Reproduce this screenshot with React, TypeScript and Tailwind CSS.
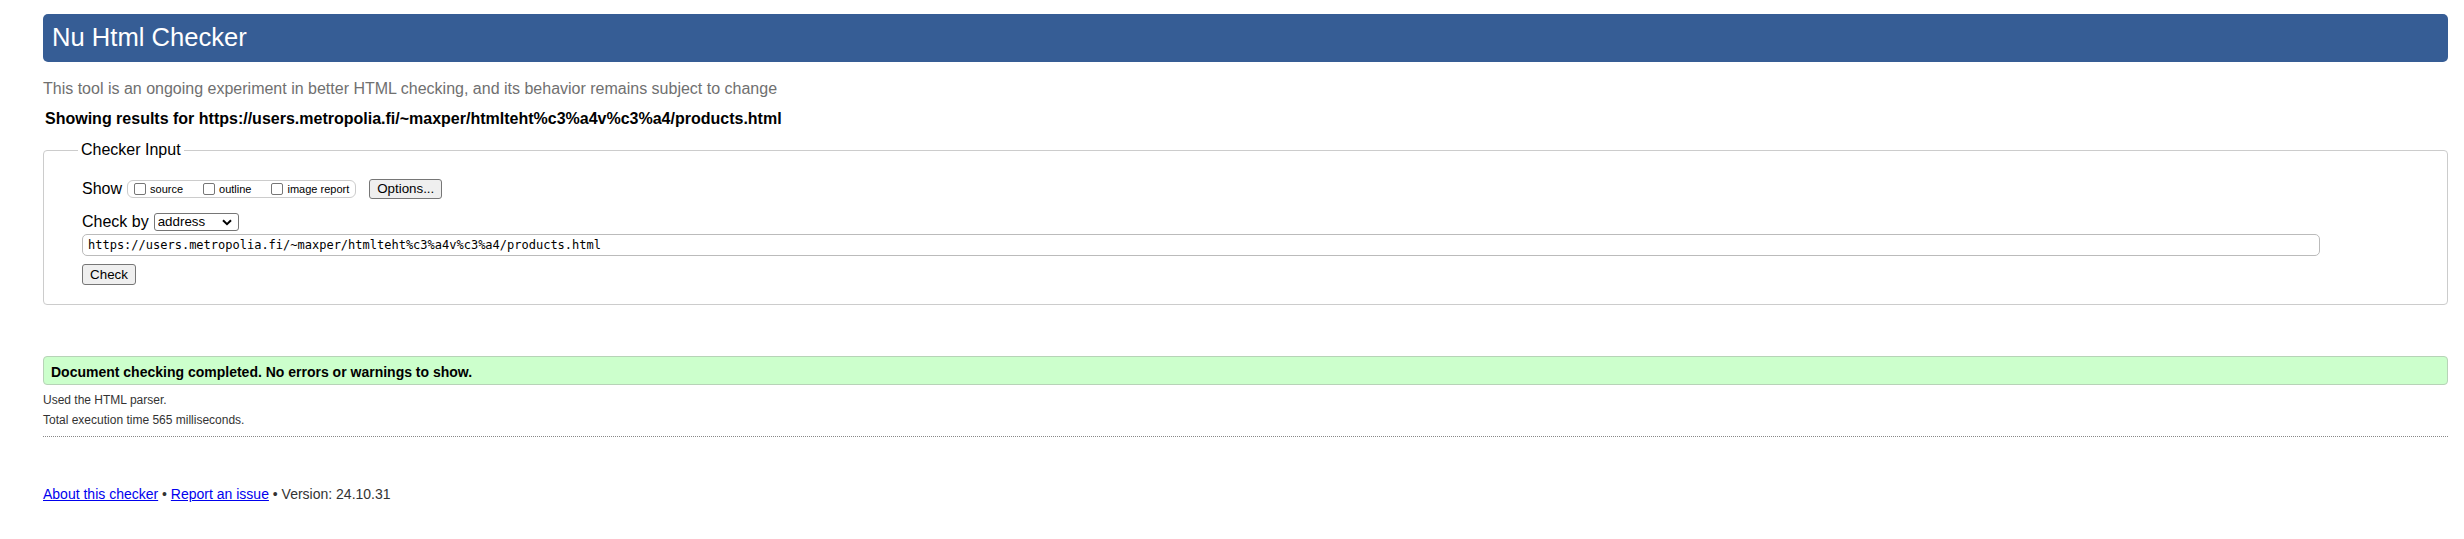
import React from "react";

function Check({ label, last }: { label: string; last?: boolean }) {
  return (
    <label className={`flex items-center text-[11px] leading-[13px] text-black ${last ? "" : "mr-[20px]"}`}>
      <input
        type="checkbox"
        className="m-0 h-[12px] w-[12px] appearance-none rounded-[2px] border border-[#767676] bg-white"
      />
      <span className="ml-[4px]">{label}</span>
    </label>
  );
}

export default function App() {
  return (
    <div className="min-h-[539px] bg-white pl-[43px] pr-[16px] pt-[14px] font-['Liberation_Sans',Arial,sans-serif] text-black">
      <h1 className="flex h-[48px] items-center rounded-[5px] bg-[#365d95] pl-[9px] text-[25.6px] font-normal leading-none text-white">
        Nu Html Checker
      </h1>

      <p className="mt-[17px] text-[16px] leading-[19px] text-[#707070]">
        This tool is an ongoing experiment in better HTML checking, and its behavior remains subject to change
      </p>
      <p className="mt-[11px] pl-[2px] text-[16px] font-bold leading-[19px]">
        Showing results for https://users.metropolia.fi/~maxper/htmlteht%c3%a4v%c3%a4/products.html
      </p>

      <fieldset className="mt-[13px] rounded-[4px] border border-[#cccccc] pb-[19px] pl-[38px]">
        <legend className="-ml-[4px] px-[3px] text-[16px] leading-[18px]">Checker Input</legend>
        <div className="pt-[20px]">
          <div className="flex h-[20px] items-center">
            <span className="text-[16px] leading-[18px]">Show</span>
            <div className="ml-[5px] flex h-[18px] items-center rounded-[6px] border border-[#cccccc] px-[6px]">
              <Check label="source" />
              <Check label="outline" />
              <Check label="image report" last />
            </div>
            <button className="ml-[13px] h-[20px] w-[73px] rounded-[3px] border border-[#767676] bg-[#efefef] text-[13.33px] leading-none text-black">
              Options...
            </button>
          </div>

          <div className="mt-[14px] flex h-[18px] items-center">
            <span className="text-[16px] leading-[18px]">Check by</span>
            <div className="relative ml-[5px]">
              <select
                defaultValue="address"
                className="block h-[18px] w-[85px] appearance-none rounded-[3px] border border-[#767676] bg-white pl-[3px] text-[13.33px] leading-none text-black"
              >
                <option value="address">address</option>
                <option value="file">file upload</option>
                <option value="text">text input</option>
              </select>
              <svg
                className="pointer-events-none absolute right-[7px] top-[6px]"
                width="10"
                height="7"
                viewBox="0 0 10 7"
                fill="none"
              >
                <path d="M1 1.2 L5 5.2 L9 1.2" stroke="#000" strokeWidth="2" />
              </svg>
            </div>
          </div>

          <input
            type="text"
            defaultValue="https://users.metropolia.fi/~maxper/htmlteht%c3%a4v%c3%a4/products.html"
            className="mt-[3px] block h-[22px] w-[2238px] rounded-[5px] border border-[#bbbbbb] bg-white pl-[5px] font-['DejaVu_Sans_Mono',monospace] text-[12px] text-black outline-none"
          />

          <button className="mt-[8px] block h-[21px] w-[54px] rounded-[3px] border border-[#767676] bg-[#efefef] text-[13.33px] leading-none text-black">
            Check
          </button>
        </div>
      </fieldset>

      <div className="mt-[51px] rounded-[4px] border border-[#b7d3b7] bg-[#ccffcc] pb-[4px] pl-[7px] pt-[7px] text-[14px] font-bold leading-[16px]">
        Document checking completed. No errors or warnings to show.
      </div>

      <p className="mt-[8px] text-[12px] leading-[14px] text-[#333333]">Used the HTML parser.</p>
      <p className="mt-[6px] text-[12px] leading-[14px] text-[#333333]">Total execution time 565 milliseconds.</p>

      <div className="mt-[9px] border-t border-dotted border-[#888888]" />

      <p className="mt-[49px] text-[14px] leading-[16px] text-[#333333]">
        <a href="#" className="text-[#0000ee] underline">
          About this checker
        </a>
        {" • "}
        <a href="#" className="text-[#0000ee] underline">
          Report an issue
        </a>
        {" • Version: 24.10.31"}
      </p>
    </div>
  );
}
